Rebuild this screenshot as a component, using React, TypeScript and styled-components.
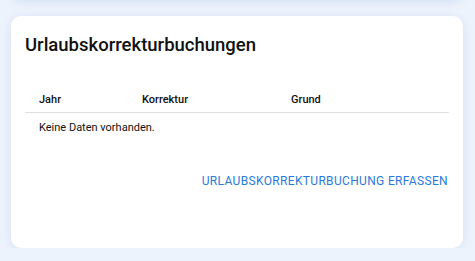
import styled, { createGlobalStyle } from "styled-components";

const GlobalStyle = createGlobalStyle`
  body {
    margin: 0;
    background: #edf3fc;
    font-family: Roboto, "Liberation Sans", sans-serif;
    color: #111;
  }
`;

const Page = styled.div`
  display: flex;
  flex-direction: column;
  gap: 16px;
  padding: 0 12px 0 11px;
`;

const Card = styled.section`
  background: #fff;
  border-radius: 10px;
  box-shadow: 0 2px 8px rgba(160, 190, 230, 0.35);
  box-sizing: border-box;
`;

const PreviousCard = styled(Card)`
  height: 22px;
  margin-top: -22px;
`;

const ContentCard = styled(Card)`
  height: 232px;
  padding: 17px 14px 14px;
  display: flex;
  flex-direction: column;
`;

const Title = styled.h2`
  margin: 0;
  font-size: 18.5px;
  font-weight: 500;
  line-height: 24px;
`;

const Table = styled.table`
  margin-top: 30px;
  width: 100%;
  border-collapse: collapse;
  table-layout: fixed;
  font-size: 11px;
`;

const HeadCell = styled.th<{ $width?: number }>`
  text-align: left;
  font-weight: 500;
  padding: 6px 14px 6px;
  border-bottom: 1px solid #e0e0e0;
  width: ${(p) => (p.$width ? `${p.$width}px` : "auto")};
`;

const Cell = styled.td`
  padding: 8px 14px;
  font-weight: 400;
`;

const Actions = styled.div`
  display: flex;
  justify-content: flex-end;
  margin-top: 28px;
`;

const TextButton = styled.button`
  border: none;
  background: none;
  padding: 4px 1px;
  font-family: Roboto, "Liberation Sans", sans-serif;
  font-size: 12px;
  letter-spacing: 0.34px;
  color: #2a7bd8;
  text-transform: uppercase;
  cursor: pointer;
`;

export default function App() {
  return (
    <>
      <GlobalStyle />
      <Page>
        <PreviousCard />
        <ContentCard>
          <Title>Urlaubskorrekturbuchungen</Title>
          <Table>
            <thead>
              <tr>
                <HeadCell $width={75}>Jahr</HeadCell>
                <HeadCell $width={121}>Korrektur</HeadCell>
                <HeadCell>Grund</HeadCell>
              </tr>
            </thead>
            <tbody>
              <tr>
                <Cell colSpan={3}>Keine Daten vorhanden.</Cell>
              </tr>
            </tbody>
          </Table>
          <Actions>
            <TextButton>Urlaubskorrekturbuchung erfassen</TextButton>
          </Actions>
        </ContentCard>
      </Page>
    </>
  );
}
